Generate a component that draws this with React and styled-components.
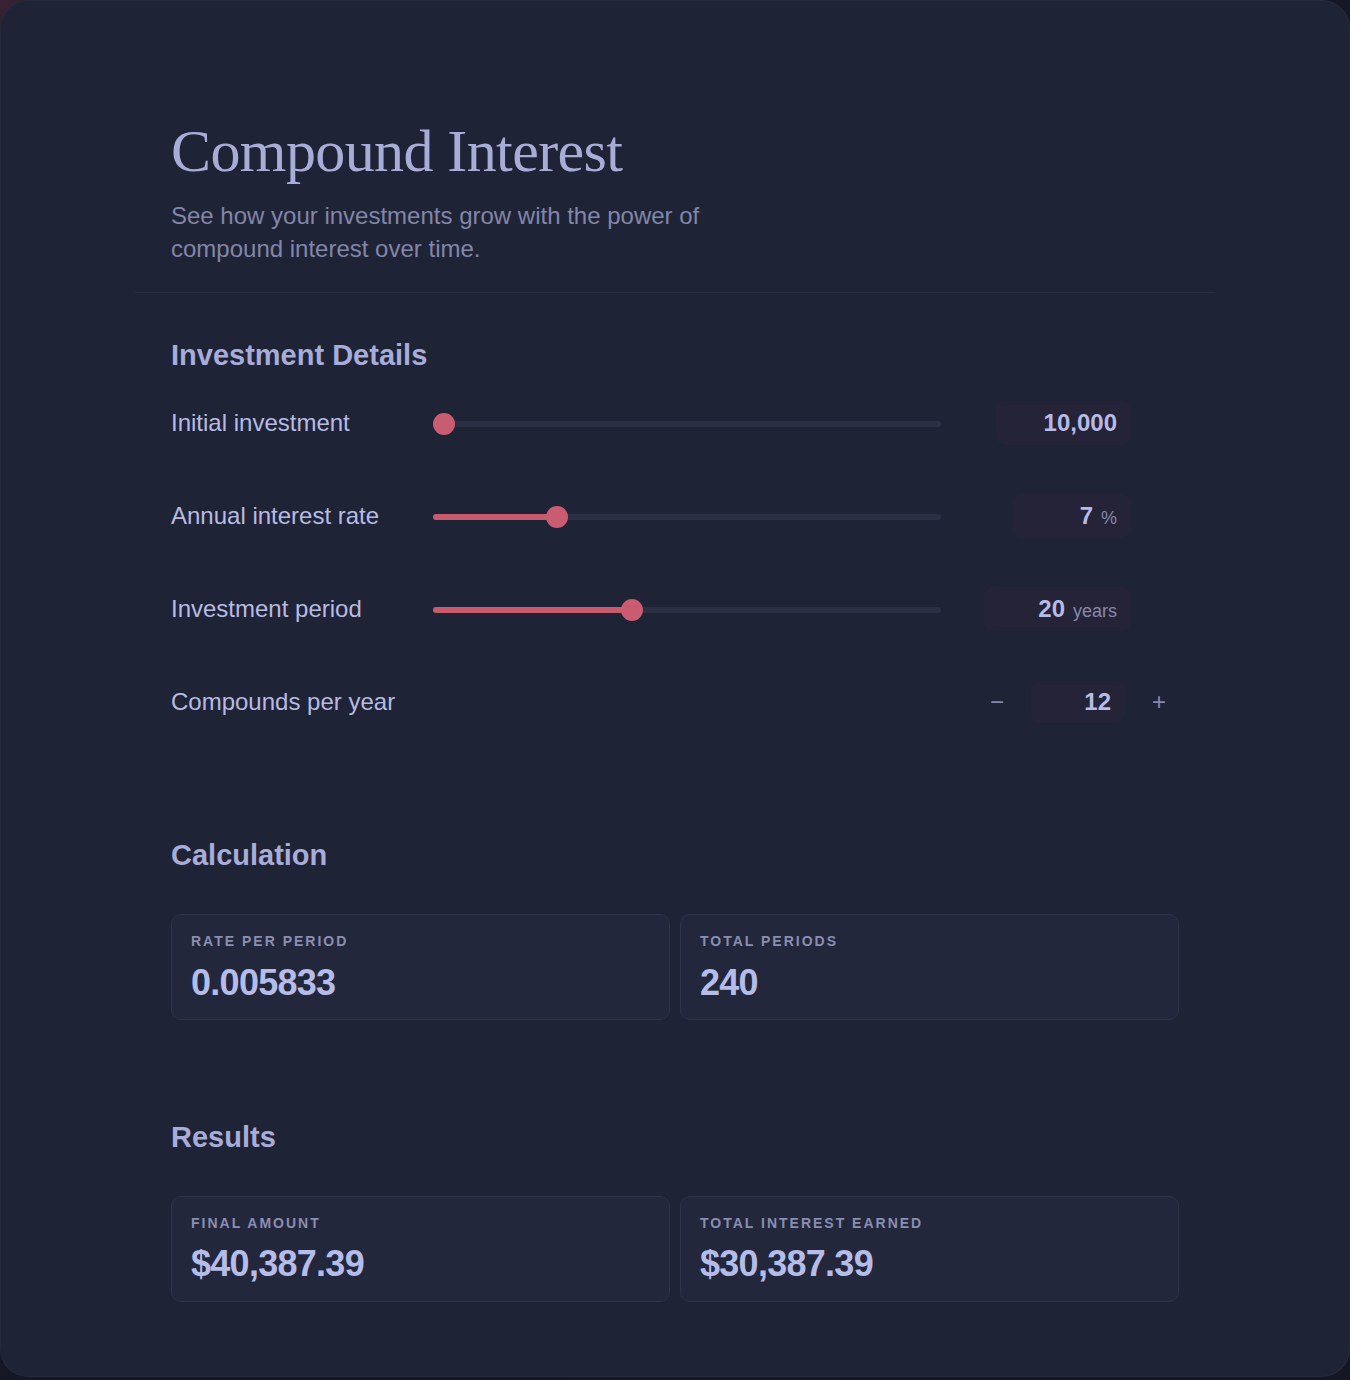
import React from "react";
import styled, { createGlobalStyle } from "styled-components";

const GlobalStyle = createGlobalStyle`
  html, body { margin: 0; padding: 0; }
  body {
    min-height: 1380px;
    background: radial-gradient(circle at 0 0, #3a2132 0, #2a1f2f 40px, #161827 260px, #141624 100%);
    font-family: "Liberation Sans", Arial, sans-serif;
  }
  * { box-sizing: border-box; }
`;

const Card = styled.main`
  width: 1350px;
  background: #1f2336;
  border-radius: 28px;
  border: 1px solid rgba(255, 255, 255, 0.035);
  padding: 0 134px 74px;
`;

const Header = styled.header`
  padding: 114px 36px 27px;
  border-bottom: 1px solid #2b2f44;
`;

const Title = styled.h1`
  margin: 0;
  font-family: "Liberation Serif", "Times New Roman", serif;
  font-weight: 400;
  font-size: 60px;
  line-height: 1.2;
  letter-spacing: -0.01em;
  color: #a8add8;
`;

const Subtitle = styled.p`
  margin: 12px 0 0;
  max-width: 560px;
  font-size: 24px;
  line-height: 1.38;
  color: #8286a8;
`;

const Section = styled.section`
  padding: ${(p) => p.$top}px 36px 0;
`;

const SectionTitle = styled.h2`
  margin: 0 0 ${(p) => p.$gap}px;
  font-size: 29px;
  font-weight: 700;
  line-height: 1.2;
  color: #a7acd8;
`;

const ControlList = styled.div`
  display: flex;
  flex-direction: column;
  gap: 49px;
`;

const SliderRow = styled.div`
  display: grid;
  grid-template-columns: 262px 508px 1fr;
  align-items: center;
  height: 44px;
`;

const StepperRow = styled.div`
  display: flex;
  align-items: center;
  justify-content: space-between;
  height: 44px;
  padding-right: 2px;
`;

const Label = styled.span`
  font-size: 24px;
  color: #b7bbe2;
`;

const Track = styled.div`
  position: relative;
  height: 6px;
  margin-top: 1px;
  border-radius: 3px;
  background: #2b2f44;
`;

const Fill = styled.div`
  position: absolute;
  left: 0;
  top: 0;
  bottom: 0;
  border-radius: 3px;
  background: #c85a6e;
`;

const Thumb = styled.div`
  position: absolute;
  top: 50%;
  width: 22px;
  height: 22px;
  margin-left: -11px;
  transform: translateY(-50%);
  border-radius: 50%;
  background: #c95c70;
`;

const ValueBox = styled.div`
  justify-self: end;
  margin-right: 48px;
  width: ${(p) => p.$w}px;
  height: 44px;
  display: flex;
  align-items: center;
  justify-content: flex-end;
  padding: 0 14px;
  border-radius: 9px;
  background: #252337;
`;

const Number = styled.span`
  font-size: 24px;
  font-weight: 700;
  color: #b6bbe8;
`;

const Unit = styled.span`
  margin-left: 8px;
  font-size: 18px;
  color: #8689ad;
`;

const Stepper = styled.div`
  display: flex;
  align-items: center;
  gap: 16px;
`;

const StepButton = styled.button`
  width: 36px;
  height: 36px;
  padding: 0;
  border: none;
  background: transparent;
  color: #8689ad;
  font-family: "Liberation Sans", Arial, sans-serif;
  font-size: 24px;
  line-height: 36px;
  cursor: pointer;
`;

const StepValue = styled.div`
  width: 94px;
  height: 42px;
  display: flex;
  align-items: center;
  justify-content: flex-end;
  padding: 0 14px;
  border-radius: 9px;
  background: #252337;
`;

const StatGrid = styled.div`
  display: grid;
  grid-template-columns: 1fr 1fr;
  gap: 10px;
`;

const StatCard = styled.div`
  border: 1px solid #2f3349;
  border-radius: 10px;
  background: #23273c;
  padding: 18px 19px 15px;
`;

const StatLabel = styled.div`
  font-size: 14px;
  font-weight: 700;
  line-height: 1.2;
  letter-spacing: 2px;
  text-transform: uppercase;
  color: #8a8eb0;
`;

const StatValue = styled.div`
  margin-top: 11px;
  font-size: 36px;
  font-weight: 700;
  line-height: 1.2;
  letter-spacing: -0.02em;
  color: #b6bce8;
`;

function Slider({ min, max, value }) {
  const pct = (value - min) / (max - min);
  const center = 11 + pct * (508 - 22);
  return (
    <Track>
      {pct > 0 && <Fill style={{ width: center }} />}
      <Thumb style={{ left: center }} />
    </Track>
  );
}

const sliders = [
  { label: "Initial investment", min: 10000, max: 1000000, value: 10000, text: "10,000", w: 135 },
  { label: "Annual interest rate", min: 0, max: 30, value: 7, text: "7", unit: "%", w: 118 },
  { label: "Investment period", min: 1, max: 50, value: 20, text: "20", unit: "years", w: 147 },
];

function Stat({ label, value }) {
  return (
    <StatCard>
      <StatLabel>{label}</StatLabel>
      <StatValue>{value}</StatValue>
    </StatCard>
  );
}

export default function App() {
  return (
    <>
      <GlobalStyle />
      <Card>
        <Header>
          <Title>Compound Interest</Title>
          <Subtitle>
            See how your investments grow with the power of compound interest over time.
          </Subtitle>
        </Header>

        <Section $top={45}>
          <SectionTitle $gap={28}>Investment Details</SectionTitle>
          <ControlList>
            {sliders.map((s) => (
              <SliderRow key={s.label}>
                <Label>{s.label}</Label>
                <Slider min={s.min} max={s.max} value={s.value} />
                <ValueBox $w={s.w}>
                  <span>
                    <Number>{s.text}</Number>
                    {s.unit && <Unit>{s.unit}</Unit>}
                  </span>
                </ValueBox>
              </SliderRow>
            ))}
            <StepperRow>
              <Label>Compounds per year</Label>
              <Stepper>
                <StepButton aria-label="decrease">−</StepButton>
                <StepValue>
                  <Number>12</Number>
                </StepValue>
                <StepButton aria-label="increase">+</StepButton>
              </Stepper>
            </StepperRow>
          </ControlList>
        </Section>

        <Section $top={114}>
          <SectionTitle $gap={41}>Calculation</SectionTitle>
          <StatGrid>
            <Stat label="Rate per period" value="0.005833" />
            <Stat label="Total periods" value="240" />
          </StatGrid>
        </Section>

        <Section $top={100}>
          <SectionTitle $gap={41}>Results</SectionTitle>
          <StatGrid>
            <Stat label="Final amount" value="$40,387.39" />
            <Stat label="Total interest earned" value="$30,387.39" />
          </StatGrid>
        </Section>
      </Card>
    </>
  );
}
